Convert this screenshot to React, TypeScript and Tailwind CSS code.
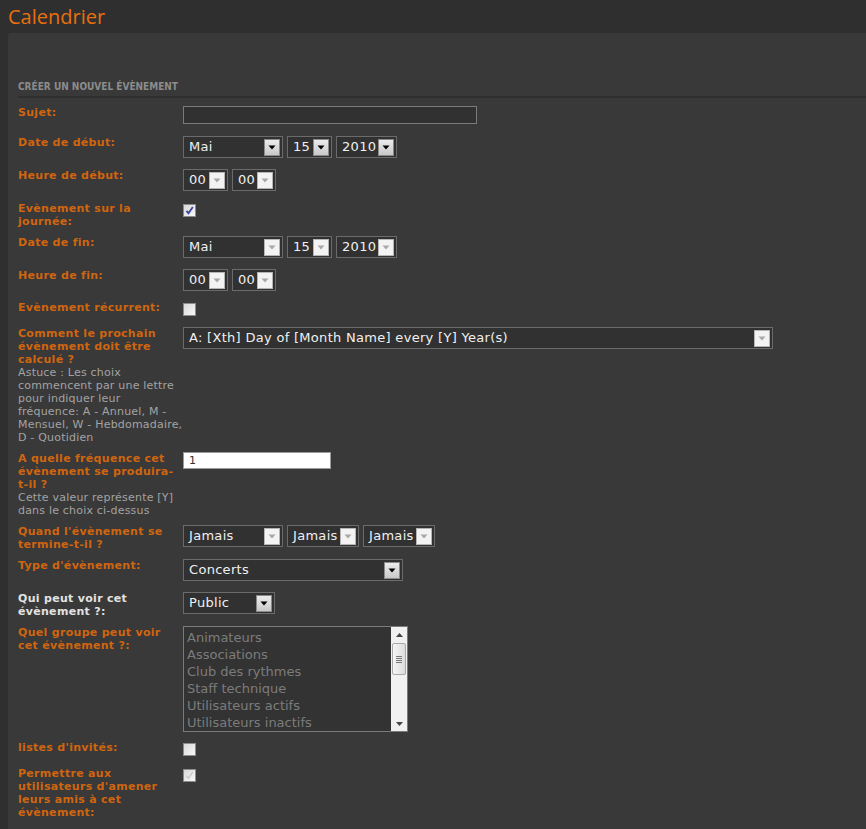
import { Fragment, type ReactNode } from 'react';

const font = { fontFamily: '"DejaVu Sans", Verdana, sans-serif' };

function Lines({ lines }: { lines: string[] }) {
  return (
    <>
      {lines.map((l, i) => (
        <Fragment key={i}>
          {i > 0 && <br />}
          {l}
        </Fragment>
      ))}
    </>
  );
}

function Arrow({ active }: { active: boolean }) {
  return (
    <span
      className={`absolute right-[2px] top-[2px] flex h-[17px] w-[16px] items-center justify-center border ${
        active
          ? 'border-[#8a8a8a] bg-gradient-to-b from-[#ececec] to-[#c9c9c9]'
          : 'border-[#b5b5b5] bg-[#f3f3f3]'
      }`}
    >
      <svg width="8" height="5" viewBox="0 0 8 5">
        <path d="M0.5 0.5h7L4 4.5z" fill={active ? '#000' : '#a8a8a8'} />
      </svg>
    </span>
  );
}

function Select({ value, width, active = false }: { value: string; width: string; active?: boolean }) {
  return (
    <div
      className={`relative h-[22px] shrink-0 border border-[#6b6b6b] bg-[#313131] pl-[5px] text-[13px] leading-[20px] tracking-[0.3px] text-[#f0f0f0] ${width}`}
    >
      {value}
      <Arrow active={active} />
    </div>
  );
}

function Checkbox({ checked = false, disabled = false }: { checked?: boolean; disabled?: boolean }) {
  return (
    <span className="mt-[2px] flex h-[13px] w-[13px] items-center justify-center border border-[#8c8c8c] bg-gradient-to-br from-[#d8d8d8] to-[#f8f8f8]">
      {checked && (
        <svg width="9" height="9" viewBox="0 0 9 9">
          <path
            d="M1.5 4.8l2 2.4L7.8 1"
            fill="none"
            stroke={disabled ? '#c4c4c4' : '#3447a3'}
            strokeWidth={disabled ? 1.2 : 1.8}
          />
        </svg>
      )}
    </span>
  );
}

function Row({
  label,
  help,
  children,
  mt,
  light = false,
}: {
  label: string[];
  help?: string[];
  children: ReactNode;
  mt: string;
  light?: boolean;
}) {
  return (
    <div className={`flex items-start ${mt}`}>
      <div className="w-[165px] shrink-0 whitespace-nowrap text-[11px] leading-[13px]">
        <div className={`font-bold tracking-[0.3px] ${light ? 'text-[#e2e2e2]' : 'text-[#d0650f]'}`}>
          <Lines lines={label} />
        </div>
        {help && (
          <div className="tracking-[0.2px] text-[#a3a3a3]">
            <Lines lines={help} />
          </div>
        )}
      </div>
      <div className="flex gap-[4px]">{children}</div>
    </div>
  );
}

const groups = [
  'Animateurs',
  'Associations',
  'Club des rythmes',
  'Staff technique',
  'Utilisateurs actifs',
  'Utilisateurs inactifs',
];

export default function App() {
  return (
    <div className="min-h-[829px] bg-[#2f2f2f]" style={font}>
      <div
        className="flex h-[33px] items-center px-[8px] text-[20px] text-[#e8700f]"
        style={{ fontFamily: '"Open Sans", "Noto Sans", sans-serif' }}
      >
        Calendrier
      </div>
      <div className="ml-[8px] min-h-[796px] rounded-tl-[3px] bg-[#393939] pb-[20px] pl-[10px]">
        <div
          className="border-b-2 border-[#2e2e2e] pt-[47px] pb-[3px] text-[10px] font-bold uppercase leading-[13px] text-[#8c8c8c]"
          style={{ fontFamily: '"DejaVu Sans Condensed", "Liberation Sans", sans-serif' }}
        >
          Créer un nouvel évènement
        </div>

        <Row label={['Sujet:']} mt="mt-[8px]">
          <div className="h-[18px] w-[294px] border border-[#7a7a7a] bg-[#313131]" />
        </Row>

        <Row label={['Date de début:']} mt="mt-[12px]">
          <Select value="Mai" width="w-[100px]" active />
          <Select value="15" width="w-[45px]" active />
          <Select value="2010" width="w-[61px]" active />
        </Row>

        <Row label={['Heure de début:']} mt="mt-[11px]">
          <Select value="00" width="w-[45px]" />
          <Select value="00" width="w-[44px]" />
        </Row>

        <Row label={['Evènement sur la', 'journée:']} mt="mt-[11px]">
          <Checkbox checked />
        </Row>

        <Row label={['Date de fin:']} mt="mt-[8px]">
          <Select value="Mai" width="w-[100px]" />
          <Select value="15" width="w-[45px]" />
          <Select value="2010" width="w-[61px]" />
        </Row>

        <Row label={['Heure de fin:']} mt="mt-[11px]">
          <Select value="00" width="w-[45px]" />
          <Select value="00" width="w-[44px]" />
        </Row>

        <Row label={['Evènement récurrent:']} mt="mt-[10px]">
          <Checkbox />
        </Row>

        <Row
          label={['Comment le prochain', 'évènement doit être', 'calculé ?']}
          help={[
            'Astuce : Les choix',
            'commencent par une lettre',
            'pour indiquer leur',
            'fréquence: A - Annuel, M -',
            'Mensuel, W - Hebdomadaire,',
            'D - Quotidien',
          ]}
          mt="mt-[11px]"
        >
          <Select value="A: [Xth] Day of [Month Name] every [Y] Year(s)" width="w-[590px]" />
        </Row>

        <Row
          label={['A quelle fréquence cet', 'évènement se produira-', 't-il ?']}
          help={['Cette valeur représente [Y]', 'dans le choix ci-dessus']}
          mt="mt-[8px]"
        >
          <div className="h-[17px] w-[148px] border border-[#9a9a9a] bg-white pl-[5px] text-[11px] leading-[15px] text-[#333]">
            1
          </div>
        </Row>

        <Row label={["Quand l'évènement se", 'termine-t-il ?']} mt="mt-[8px]">
          <Select value="Jamais" width="w-[100px]" />
          <Select value="Jamais" width="w-[72px]" />
          <Select value="Jamais" width="w-[72px]" />
        </Row>

        <Row label={["Type d'évènement:"]} mt="mt-[8px]">
          <Select value="Concerts" width="w-[220px]" active />
        </Row>

        <Row label={['Qui peut voir cet', 'évènement ?:']} mt="mt-[11px]" light>
          <Select value="Public" width="w-[92px]" active />
        </Row>

        <Row label={['Quel groupe peut voir', 'cet évènement ?:']} mt="mt-[8px]">
          <div className="flex h-[106px] w-[225px] border border-[#7a7a7a] bg-[#333]">
            <div className="flex-1 pl-[3px] pt-[2px] text-[13px] leading-[17px] text-[#7c7c7c]">
              {groups.map((g) => (
                <div key={g}>{g}</div>
              ))}
            </div>
            <div className="flex w-[16px] flex-col items-center bg-[#f1f1f1]">
              <svg width="7" height="4" viewBox="0 0 7 4" className="mt-[6px]">
                <path d="M0 4L3.5 0L7 4z" fill="#444" />
              </svg>
              <div className="mt-[6px] flex h-[32px] w-[14px] flex-col items-center justify-center gap-[1px] rounded-[2px] border border-[#a9a9a9] bg-gradient-to-r from-[#f6f6f6] to-[#dcdcdc]">
                <span className="h-px w-[6px] bg-[#777]" />
                <span className="h-px w-[6px] bg-[#777]" />
                <span className="h-px w-[6px] bg-[#777]" />
                <span className="h-px w-[6px] bg-[#777]" />
              </div>
              <div className="flex-1" />
              <svg width="7" height="4" viewBox="0 0 7 4" className="mb-[5px]">
                <path d="M0 0L3.5 4L7 0z" fill="#444" />
              </svg>
            </div>
          </div>
        </Row>

        <Row label={["listes d'invités:"]} mt="mt-[9px]">
          <Checkbox />
        </Row>

        <Row
          label={['Permettre aux', "utilisateurs d'amener", 'leurs amis à cet', 'évènement:']}
          mt="mt-[11px]"
        >
          <Checkbox checked disabled />
        </Row>
      </div>
    </div>
  );
}
